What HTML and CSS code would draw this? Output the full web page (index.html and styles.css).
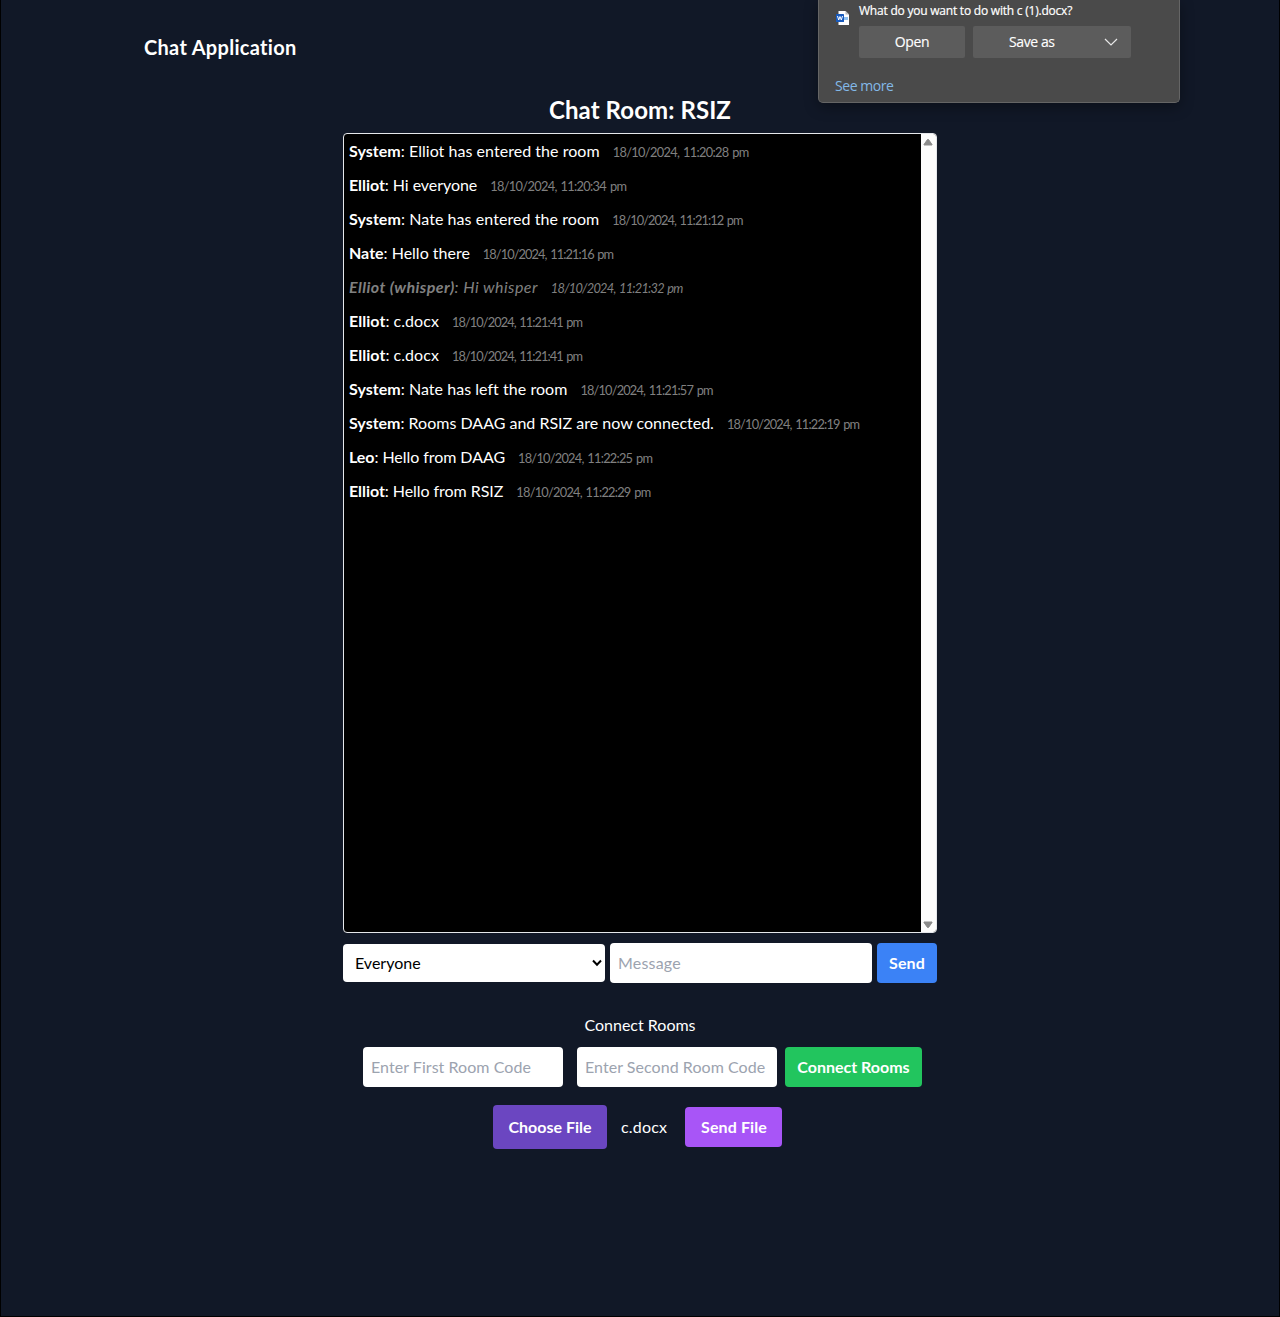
FILE: index.html
```html
<!DOCTYPE html>
<html lang="en">
<head>
<meta charset="utf-8">
<title>Chat Application</title>
<link rel="stylesheet" href="styles.css">
</head>
<body>
<header class="site-header"><span class="brand">Chat Application</span></header>
<main class="room">
  <h1 class="room-title">Chat Room: RSIZ</h1>
  <section class="chat">
    <div class="messages">
      <p class="message"><span class="open-set"><b>System</b>: Elliot has entered the room</span><time class="wide">18/10/2024, 11:20:28 pm</time></p>
      <p class="message"><span class="snug"><b>Elliot</b>: Hi everyone</span><time class="wide">18/10/2024, 11:20:34 pm</time></p>
      <p class="message"><span class="loose"><b>System</b>: Nate has entered the room</span><time class="narrow">18/10/2024, 11:21:12 pm</time></p>
      <p class="message"><span><b>Nate</b>: Hello there</span><time class="narrow">18/10/2024, 11:21:16 pm</time></p>
      <p class="message whisper"><span><b>Elliot (whisper)</b>: Hi whisper</span><time>18/10/2024, 11:21:32 pm</time></p>
      <p class="message"><span class="open-set"><b>Elliot</b>: c.docx</span><time class="narrow">18/10/2024, 11:21:41 pm</time></p>
      <p class="message"><span class="open-set"><b>Elliot</b>: c.docx</span><time class="narrow">18/10/2024, 11:21:41 pm</time></p>
      <p class="message"><span class="open-set"><b>System</b>: Nate has left the room</span><time>18/10/2024, 11:21:57 pm</time></p>
      <p class="message"><span><b>System</b>: Rooms DAAG and RSIZ are now connected.</span><time>18/10/2024, 11:22:19 pm</time></p>
      <p class="message"><span class="snug"><b>Leo</b>: Hello from DAAG</span><time class="medium">18/10/2024, 11:22:25 pm</time></p>
      <p class="message"><span class="snug"><b>Elliot</b>: Hello from RSIZ</span><time class="medium">18/10/2024, 11:22:29 pm</time></p>
    </div>
    <div class="scrollbar" aria-hidden="true">
      <svg width="10" height="8" viewBox="0 0 10 8"><path d="M4.500 1.500h1L9 6.500V7H1v-.5Z"/></svg>
      <svg width="10" height="8" viewBox="0 0 10 8"><path d="M4.500 6.500h1L9 1.500V1H1v.5Z"/></svg>
    </div>
  </section>
  <form class="composer">
    <div class="select" role="combobox" tabindex="0"><span>Everyone</span>
      <svg width="10" height="8" viewBox="0 0 10 8"><path d="M1 1.500 5 5.700 9 1.500"/></svg>
    </div>
    <input class="field" type="text" placeholder="Message">
    <button class="btn send" type="button">Send</button>
  </form>
  <p class="connect-label">Connect Rooms</p>
  <form class="connect">
    <input class="field" type="text" placeholder="Enter First Room Code">
    <input class="field" type="text" placeholder="Enter Second Room Code">
    <button class="btn join" type="button">Connect Rooms</button>
  </form>
  <form class="files">
    <button class="btn choose" type="button">Choose File</button>
    <span class="file-name">c.docx</span>
    <button class="btn send-file" type="button">Send File</button>
  </form>
</main>
<aside class="download">
  <svg class="doc-icon" width="14" height="16" viewBox="0 0 14 16">
    <path d="M2.500 1h7L13 4.500V15H2.500Z" fill="#fff"/>
    <path d="M9.500 1 13 4.500H9.500Z" fill="#b9b9b9"/>
    <path d="M8 7h4v3H8Z" fill="#8fc1f0"/>
    <rect y="4" width="8" height="8" rx=".6" fill="#185abd"/>
    <path d="M1.500 6 2.700 10 4 6.500 5.300 10 6.500 6" fill="none" stroke="#fff"/>
  </svg>
  <div class="download-body">
    <p class="download-title">What do you want to do with c (1).docx?</p>
    <div class="download-actions">
      <button class="dl-btn open" type="button">Open</button>
      <button class="dl-btn save" type="button"><span>Save as</span>
        <svg width="14" height="8" viewBox="0 0 14 8"><path d="M1 1 7 7 13 1"/></svg>
      </button>
    </div>
  </div>
  <a class="see-more">See more</a>
</aside>
</body>
</html>
```
FILE: styles.css
```css
* { box-sizing: border-box; margin: 0; }
body {
  min-height: 1317px;
  border: solid #000;
  border-width: 0 1px 1px;
  background: #111827;
  color: #fff;
  font: 16px/24px Lato, sans-serif;
}
button, input { font: inherit; border: 0; }

.site-header { padding: 33px 143px 0; height: 94px; }
.brand { display: block; font-size: 20px; line-height: 28px; font-weight: 700; letter-spacing: .3px; }

.room { width: 594px; margin: 0 auto; }
.room-title { font-size: 24px; line-height: 32px; font-weight: 700; text-align: center; margin-bottom: 7px; letter-spacing: .08px; }

.chat {
  display: flex;
  height: 800px;
  border: 1px solid #e5e7eb;
  border-radius: 4px;
  background: #000;
  overflow: hidden;
}
.messages { flex: 1; }
.message { height: 34px; padding: 5px; white-space: nowrap; }
.message time { margin-left: 13px; font-size: 12.8px; color: #808080; letter-spacing: -.83px; word-spacing: 1.2px; }
.message time.wide { letter-spacing: -.67px; }
.message time.medium { letter-spacing: -.75px; }
.message time.narrow { letter-spacing: -.92px; }
.snug { letter-spacing: -.06px; }
.open-set { letter-spacing: .04px; }
.loose { letter-spacing: .07px; }
.whisper { color: #808080; font-style: italic; }
.whisper span { letter-spacing: .44px; }
.message.whisper time { letter-spacing: -.75px; }

.scrollbar {
  width: 15px;
  padding: 4px 0 3px;
  display: flex;
  flex-direction: column;
  justify-content: space-between;
  align-items: center;
  background: #fcfcfc;
}
.scrollbar svg { margin-right: 1px; }
.scrollbar path { fill: #8b8b8b; stroke: #8b8b8b; stroke-linejoin: round; }

.composer { display: flex; align-items: center; gap: 5px; margin-top: 10px; }
.select, .composer .field { width: 262px; }
.select {
  display: flex;
  align-items: center;
  justify-content: space-between;
  height: 38px;
  padding: 0 3px 0 12px;
  border-radius: 4px;
  background: #fff;
  color: #000;
}
.select path { fill: none; stroke: #000; stroke-width: 2; }
.field { height: 40px; padding: 7px 8px 9px; border-radius: 4px; background: #fff; color: #000; }
.field::placeholder { color: #9ca3af; opacity: 1; letter-spacing: .05px; }
.composer .field::placeholder { letter-spacing: .2px; }

.btn { height: 40px; padding: 0; border-radius: 4px; color: #fff; font-weight: 700; }
.send { width: 60px; background: #3b82f6; letter-spacing: .15px; }

.connect-label { margin: 30px 0 10px; text-align: center; }
.connect { display: flex; padding-left: 20px; }
.connect .field { width: 200px; margin-right: 14px; }
.connect .field + .field { margin-right: 8px; }
.join { width: 137px; background: #22c55e; }

.files { display: flex; align-items: center; padding-left: 150px; margin-top: 18px; }
.choose { width: 114px; height: 44px; background: #6b46c1; }
.file-name { width: 78px; padding-left: 14px; letter-spacing: .2px; }
.send-file { width: 97px; padding-left: 1px; background: #a855f7; letter-spacing: .1px; }

.download {
  position: absolute;
  top: 0;
  left: 818px;
  width: 362px;
  height: 103px;
  padding: 0 16px;
  display: grid;
  grid-template-columns: 24px 1fr;
  grid-template-rows: 76px 20px;
  border: 1px solid #656565;
  border-top: 0;
  border-radius: 0 0 5px 5px;
  background: #4a4a4a;
  box-shadow: 0 4px 14px rgba(0, 0, 0, .35);
  font: 14px/20px "Open Sans", sans-serif;
}
.doc-icon { margin: 10px 0 0 1px; }
.download-title { font-size: 12px; line-height: 16px; padding-top: 3px; height: 26px; font-weight: 500; white-space: nowrap; letter-spacing: -.22px; -webkit-text-stroke: .2px; }
.download-actions { display: flex; gap: 8px; }
.dl-btn { height: 32px; padding: 0; border-radius: 2px; background: #5c5c5c; color: #fff; letter-spacing: -.4px; -webkit-text-stroke: .15px; }
.open { width: 106px; }
.save { width: 158px; padding: 0 13px 0 36px; display: flex; align-items: center; justify-content: space-between; }
.save path { fill: none; stroke: #e8e8e8; stroke-width: 1.2; }
.see-more { grid-column: 1 / 3; color: #83b9e8; letter-spacing: -.45px; white-space: nowrap; }
```
